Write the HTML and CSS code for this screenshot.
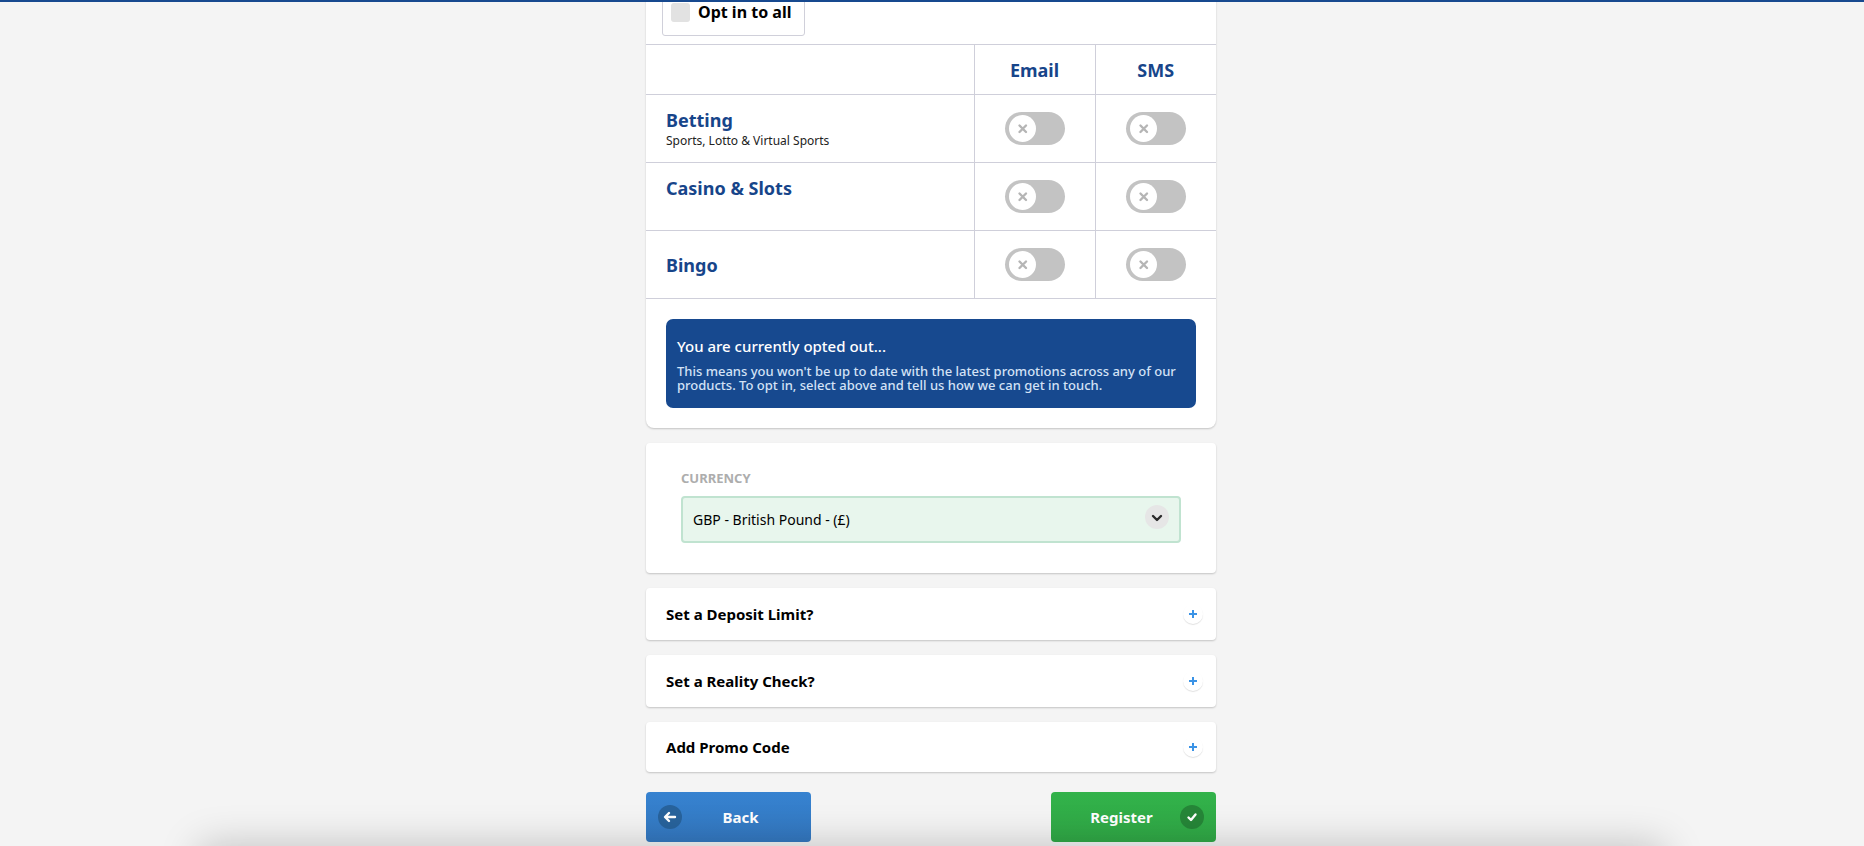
FILE: index.html
```html
<!DOCTYPE html>
<html lang="en">
<head>
    <meta charset="UTF-8">
    <title>Register</title>
    <link rel="stylesheet" href="styles.css">
</head>
<body>
    <svg width="0" height="0" class="sprite">
        <symbol id="plus" viewBox="0 0 20 20"><path d="M10 6v8M6 10h8" fill="none" stroke="currentColor" stroke-width="2"/></symbol>
        <symbol id="cross" viewBox="0 0 27 27"><path d="M10.5 10.5l6.5 6.5M17 10.5l-6.5 6.5" fill="none" stroke="currentColor" stroke-width="2.4" stroke-linecap="round"/></symbol>
    </svg>
    <header class="topbar"></header>
    <main class="page">
        <form class="register">
            <section class="card preferences">
                <label class="opt-all"><input type="checkbox"><span>Opt in to all</span></label>
                <table class="channels">
                    <thead>
                        <tr><td></td><th scope="col">Email</th><th scope="col">SMS</th></tr>
                    </thead>
                    <tbody>
                        <tr>
                            <th scope="row"><span class="product">Betting</span><span class="detail">Sports, Lotto &amp; Virtual Sports</span></th>
                            <td><label class="toggle"><input type="checkbox" aria-label="Betting by email"><svg><use href="#cross"/></svg></label></td>
                            <td><label class="toggle"><input type="checkbox" aria-label="Betting by SMS"><svg><use href="#cross"/></svg></label></td>
                        </tr>
                        <tr>
                            <th scope="row"><span class="product">Casino &amp; Slots</span><span class="detail"></span></th>
                            <td><label class="toggle"><input type="checkbox" aria-label="Casino and slots by email"><svg><use href="#cross"/></svg></label></td>
                            <td><label class="toggle"><input type="checkbox" aria-label="Casino and slots by SMS"><svg><use href="#cross"/></svg></label></td>
                        </tr>
                        <tr>
                            <th scope="row"><span class="product">Bingo</span></th>
                            <td><label class="toggle"><input type="checkbox" aria-label="Bingo by email"><svg><use href="#cross"/></svg></label></td>
                            <td><label class="toggle"><input type="checkbox" aria-label="Bingo by SMS"><svg><use href="#cross"/></svg></label></td>
                        </tr>
                    </tbody>
                </table>
                <div class="notice">
                    <h2>You are currently opted out...</h2>
                    <p>This means you won't be up to date with the latest promotions across any of our products. To opt in, select above and tell us how we can get in touch.</p>
                </div>
            </section>

            <section class="card currency">
                <label for="currency">CURRENCY</label>
                <div class="select">
                    <select id="currency">
                        <option>GBP - British Pound - (£)</option>
                    </select>
                    <svg viewBox="0 0 24 24"><circle cx="12" cy="12" r="12" fill="#e6e6e6"/><path d="M8 11l4 4 4-4" fill="none" stroke="#2b2b2b" stroke-width="2.4" stroke-linecap="round" stroke-linejoin="round"/></svg>
                </div>
            </section>

            <button type="button" class="card expander">Set a Deposit Limit?<svg><use href="#plus"/></svg></button>
            <button type="button" class="card expander">Set a Reality Check?<svg><use href="#plus"/></svg></button>
            <button type="button" class="card expander promo">Add Promo Code<svg><use href="#plus"/></svg></button>

            <div class="actions">
                <button type="button" class="back">
                    <svg viewBox="0 0 24 24"><circle cx="12" cy="12" r="12" fill="#28639c"/><path d="M17 12H7.500M11 8l-4 4 4 4" fill="none" stroke="#fff" stroke-width="2.4" stroke-linecap="round" stroke-linejoin="round"/></svg>
                    <span>Back</span>
                </button>
                <button type="submit" class="submit">
                    <span>Register</span>
                    <svg viewBox="0 0 24 24"><circle cx="12" cy="12" r="12" fill="#268638"/><path d="M8.500 12.500l2.500 2.500 4.500-5.500" fill="none" stroke="#fff" stroke-width="2.400" stroke-linecap="round" stroke-linejoin="round"/></svg>
                </button>
            </div>
        </form>
    </main>
    <footer class="drawer"></footer>
</body>
</html>
```

FILE: styles.css
```css
* {
    box-sizing: border-box;
}

body {
    margin: 0;
    padding-right: 2px;
    background: #f4f4f4;
    color: #000;
    font-family: "Noto Sans", "Open Sans", sans-serif;
    font-size: 14px;
}

button, select {
    font-family: inherit;
    color: inherit;
}

.sprite {
    position: absolute;
}

.topbar {
    position: fixed;
    top: 0;
    left: 0;
    right: 0;
    height: 2px;
    background: #17498f;
    z-index: 2;
}

/* the form starts scrolled a little under the top bar */
.page {
    max-width: 570px;
    margin: -28px auto 0;
}

.register {
    display: flex;
    flex-direction: column;
    gap: 15px;
}

.card {
    background: #fff;
    border: none;
    border-radius: 4px;
    box-shadow: 0 1px 2px rgba(0, 0, 0, 0.2);
}

.preferences {
    padding-top: 16px;
    border-radius: 8px;
}

.opt-all {
    display: inline-flex;
    align-items: center;
    gap: 8px;
    height: 48px;
    margin: 0 16px 8px;
    padding: 0 13px 0 8px;
    border: 1px solid #d0d0da;
    border-radius: 3px;
    font-size: 16px;
    font-weight: 700;
}

.opt-all input {
    appearance: none;
    width: 19px;
    height: 19px;
    margin: 0;
    border-radius: 3px;
    background: #e2e2e2;
}

.channels {
    width: 100%;
    border-collapse: collapse;
    table-layout: fixed;
}

.channels tr {
    height: 68px;
    border-top: 1px solid #cfcfda;
    border-bottom: 1px solid #cfcfda;
}

.channels thead tr {
    height: 50px;
}

.channels th, .channels td {
    width: 121px;
    padding: 0;
    color: #17458a;
    font-size: 18px;
    font-weight: 700;
    line-height: 24px;
    text-align: center;
    border-left: 1px solid #cfcfda;
}

.channels tr > :first-child {
    width: auto;
    padding-left: 20px;
    text-align: left;
    border-left: none;
}

.product, .detail {
    display: block;
}

.detail {
    min-height: 18px;
    color: #222;
    font-size: 12px;
    font-weight: 400;
    line-height: 18px;
}

.toggle {
    display: inline-flex;
    align-items: center;
    width: 60px;
    height: 33px;
    padding: 0 4px;
    border-radius: 17px;
    background: #c3c3c3;
    vertical-align: middle;
}

.toggle input {
    appearance: none;
    margin: 0;
}

.toggle svg {
    width: 27px;
    height: 27px;
    border-radius: 50%;
    background: #fff;
    color: #b5b5b5;
}

.toggle:has(:checked) {
    justify-content: flex-end;
    background: #32b14a;
}

.notice {
    margin: 20px;
    padding: 16px 11px;
    border-radius: 7px;
    background: #17498f;
    color: #fff;
}

.notice h2 {
    margin: 0 0 7px;
    font-size: 15px;
    font-weight: 500;
    line-height: 22px;
}

.notice p {
    margin: 0;
    color: #d3e2f6;
    font-size: 13px;
    font-weight: 500;
    line-height: 14px;
}

.currency {
    padding: 26px 35px 30px;
}

.currency label {
    display: block;
    margin-bottom: 9px;
    color: #adadad;
    font-size: 13px;
    font-weight: 700;
    line-height: 18px;
}

.select {
    display: grid;
    align-items: center;
}

.select select, .select svg {
    grid-area: 1 / 1;
}

.select select {
    appearance: none;
    width: 100%;
    height: 47px;
    padding: 0 10px;
    border: 2px solid #c0e3d0;
    border-radius: 4px;
    background: #e8f6ed;
    font-size: 14px;
}

.select svg {
    justify-self: end;
    width: 24px;
    height: 24px;
    margin: 0 12px 5px 0;
    pointer-events: none;
}

.expander {
    display: flex;
    justify-content: space-between;
    align-items: center;
    height: 52px;
    padding: 0 13px 0 20px;
    font-size: 15px;
    font-weight: 700;
    text-align: left;
    cursor: pointer;
}

.expander svg {
    width: 20px;
    height: 20px;
    border-radius: 50%;
    box-shadow: 0 1px 1px rgba(0, 0, 0, 0.12);
    color: #3b93e6;
}

.promo {
    height: 50px;
}

.actions {
    display: flex;
    justify-content: space-between;
    margin-top: 5px;
}

.actions button {
    display: flex;
    align-items: center;
    width: 165px;
    height: 50px;
    padding: 0 12px;
    border: none;
    border-radius: 4px;
    color: #fff;
    font-size: 15px;
    font-weight: 700;
    cursor: pointer;
}

.actions span {
    flex: 1;
    text-align: center;
}

.actions svg {
    width: 24px;
    height: 24px;
}

.back {
    background: linear-gradient(#3682d0, #3478c0);
}

.submit {
    background: linear-gradient(#32b24a, #30a846);
}

/* sits just below the window, only its shadow reaches up */
.drawer {
    position: fixed;
    top: 100%;
    left: 200px;
    right: 200px;
    height: 80px;
    box-shadow: 0 0 40px rgba(0, 0, 0, 0.22);
}
```
